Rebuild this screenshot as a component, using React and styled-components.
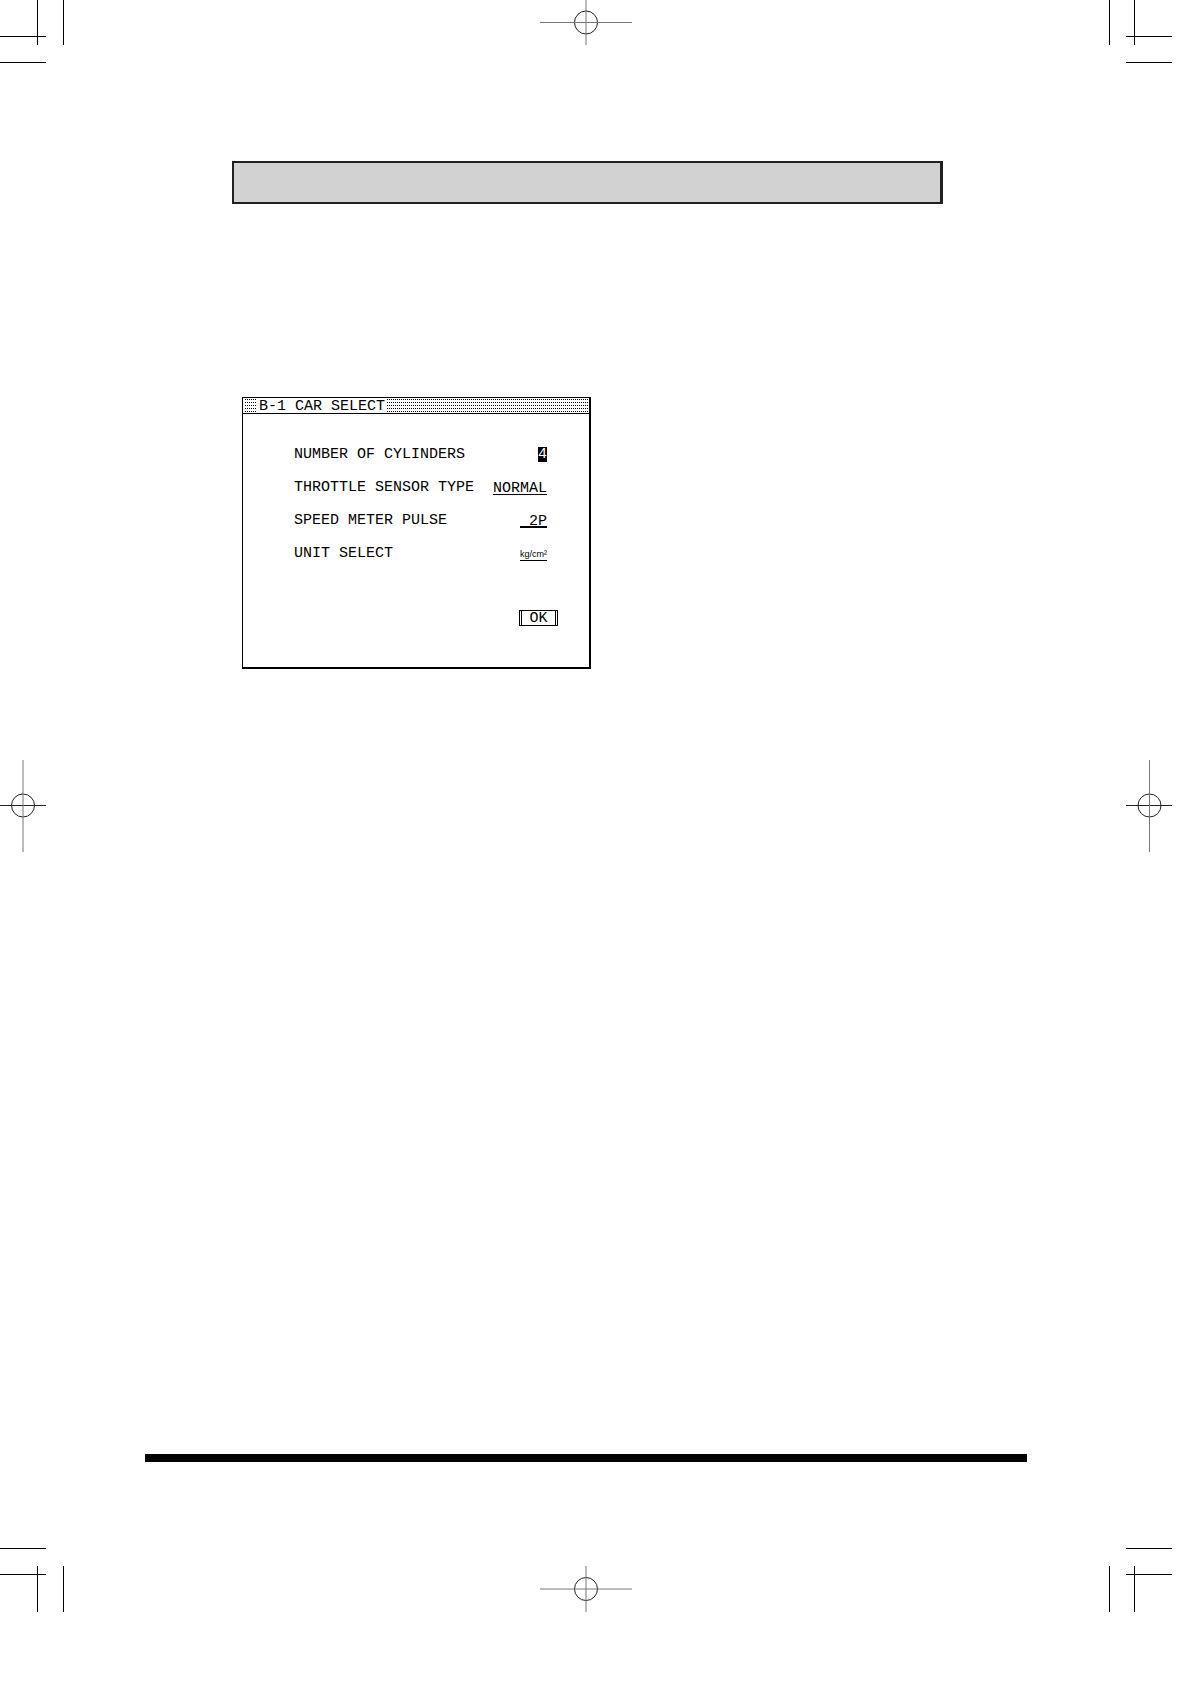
import React from "react";
import styled, { createGlobalStyle } from "styled-components";

const GlobalStyle = createGlobalStyle`
  *, *::before, *::after { box-sizing: border-box; }
  body { margin: 0; background: #fff; color: #000; }
`;

const mono = `"Liberation Mono", monospace`;

const Sheet = styled.div`
  display: grid;
  grid-template-columns: 64px minmax(0, 1fr) 64px;
  grid-template-rows: 64px 1fr 64px;
  justify-items: center;
  align-items: center;
  min-height: calc(100vh - 72px);
  margin: 0 18px 72px 0;
`;

const Mark = styled.svg`
  display: block;
  fill: none;
  stroke: #000;
  stroke-width: 1px;
`;

const Content = styled.main`
  align-self: stretch;
  justify-self: stretch;
  display: flex;
  flex-direction: column;
  padding: 97px 81px 86px;
`;

const Body = styled.div`
  flex: 1;
  padding: 0 84px 48px 87px;
`;

const HeadingBar = styled.header`
  height: 43px;
  border: 2px solid #202020;
  border-right-width: 3px;
  background: #d2d2d2;
`;

const FooterRule = styled.hr`
  width: 100%;
  height: 8px;
  margin: 0;
  border: 0;
  background: #000;
`;

const Panel = styled.form`
  width: 349px;
  max-width: 100%;
  margin: 193px 0 0 10px;
  border: solid #000;
  border-width: 1px 2px 2px 1px;
  font: 15px/18px ${mono};
`;

const TitleBar = styled.div`
  height: 16px;
  padding: 0 0 0 14px;
  border-bottom: 1px solid #000;
  background: linear-gradient(#fff, #fff) 0 0 / 2px 100% no-repeat,
    linear-gradient(90deg, transparent 1px, #fff 1px) 0 0 / 2px 3px,
    linear-gradient(transparent 1px, #000 1px, #000 2px, transparent 2px) 0 0 / 2px 3px;
`;

const Title = styled.h1`
  display: inline-block;
  height: 15px;
  margin: 0;
  padding: 0 1px 0 2px;
  background: #fff;
  font: 15px/17px ${mono};
  vertical-align: top;
`;

const Fields = styled.div`
  padding: 24px 42px 0 51px;
`;

const Field = styled.div`
  display: flex;
  align-items: center;
  justify-content: space-between;
  height: 33px;
`;

const Label = styled.label`
  padding-top: 1px;
`;

const Value = styled.select`
  appearance: none;
  width: ${(p) => p.$width}px;
  height: 15px;
  margin: 0;
  padding: ${(p) => (p.$small ? 3 : p.$line ? 2 : 0)}px 0 0;
  border: 0 solid #000;
  border-bottom-width: ${(p) => p.$line || 0}px;
  border-radius: 0;
  background: ${(p) => (p.$active ? "#000" : "#fff")};
  color: ${(p) => (p.$active ? "#fff" : "#000")};
  font: ${(p) => (p.$small ? `9px/11px "Liberation Sans", sans-serif` : `15px/14px ${mono}`)};
  text-align: right;
  text-align-last: right;
`;

const Actions = styled.div`
  display: flex;
  justify-content: flex-end;
  padding: 40px 31px 41px;
`;

const OkButton = styled.button`
  width: 39px;
  height: 16px;
  padding: 0 1px;
  border: 1px solid #000;
  border-radius: 0;
  background: #fff;
  color: #000;
  font: 15px/16px ${mono};
`;

const OkLabel = styled.span`
  display: block;
  height: 14px;
  border: solid #000;
  border-width: 0 1px;
`;

const fields = [
  { id: "cylinders", label: "NUMBER OF CYLINDERS", value: "4", width: 9, active: true },
  { id: "throttle", label: "THROTTLE SENSOR TYPE", value: "NORMAL", width: 54, line: 1 },
  { id: "pulse", label: "SPEED METER PULSE", value: "2P", width: 27, line: 2 },
  { id: "unit", label: "UNIT SELECT", value: "kg/cm²", width: 27, line: 1, small: true },
];

function CornerMark({ right, bottom }) {
  const xs = right ? [1.5, 26.5] : [37.5, 63.5];
  const ys = bottom ? [0.5, 26.5] : [36.5, 62.5];
  const x = right ? 18 : 0;
  const y = bottom ? 18 : -1;
  return (
    <Mark width="64" height="64" aria-hidden="true">
      {xs.map((v) => <path key={v} d={`M${v} ${y}v46`} />)}
      {ys.map((v) => <path key={v} d={`M${x} ${v}h46`} />)}
    </Mark>
  );
}

function TargetMark({ width, height, cx, cy, x, y, w, h, pale }) {
  return (
    <Mark width={width} height={height} aria-hidden="true">
      <circle cx={cx} cy={cy} r="11.5" stroke="#222" />
      <path d={`M${x} ${cy}h${w}`} stroke={pale ? "#777" : "#222"} />
      <path d={`M${cx} ${y}v${h}`} stroke="#777" />
    </Mark>
  );
}

export default function App() {
  return (
    <>
      <GlobalStyle />
      <Sheet>
        <CornerMark />
        <TargetMark width={92} height={64} cx={46} cy={22.5} x={0} y={0} w={92} h={45} pale />
        <CornerMark right />

        <TargetMark width={64} height={92} cx={23} cy={45.5} x={0} y={0} w={46} h={92} />
        <Content>
          <Body>
            <HeadingBar />
            <Panel onSubmit={(e) => e.preventDefault()}>
              <TitleBar>
                <Title>B-1 CAR SELECT</Title>
              </TitleBar>
              <Fields>
                {fields.map((f) => (
                  <Field key={f.id}>
                    <Label htmlFor={f.id}>{f.label}</Label>
                    <Value id={f.id} $width={f.width} $line={f.line} $active={f.active} $small={f.small}>
                      <option>{f.value}</option>
                    </Value>
                  </Field>
                ))}
              </Fields>
              <Actions>
                <OkButton type="submit">
                  <OkLabel>OK</OkLabel>
                </OkButton>
              </Actions>
            </Panel>
          </Body>
          <FooterRule />
        </Content>
        <TargetMark width={64} height={92} cx={41.5} cy={45.5} x={18} y={0} w={46} h={92} />

        <CornerMark bottom />
        <TargetMark width={92} height={64} cx={46} cy={41} x={0} y={18} w={92} h={46} pale />
        <CornerMark right bottom />
      </Sheet>
    </>
  );
}
